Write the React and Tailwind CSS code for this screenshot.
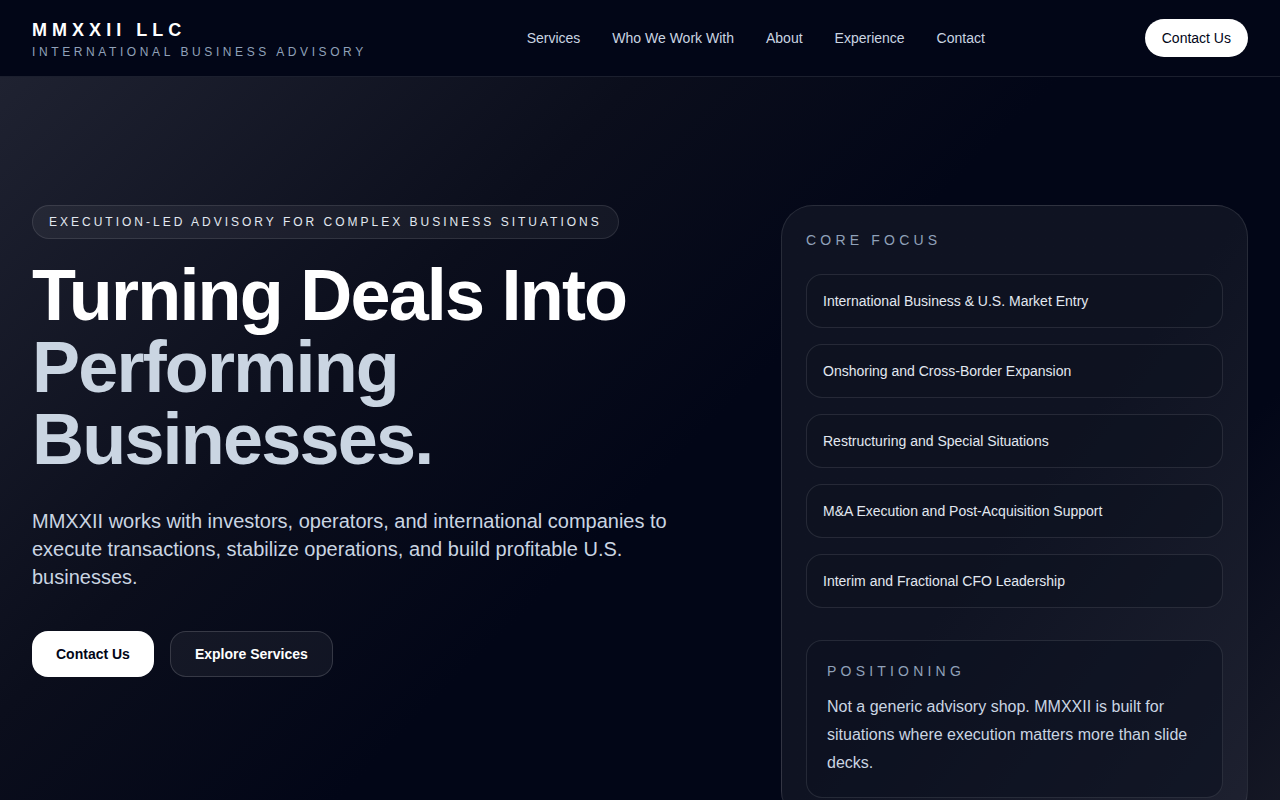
import { useState } from "react";

const navLinks = ["Services", "Who We Work With", "About", "Experience", "Contact"];

const focusItems = [
    "International Business & U.S. Market Entry",
    "Onshoring and Cross-Border Expansion",
    "Restructuring and Special Situations",
    "M&A Execution and Post-Acquisition Support",
    "Interim and Fractional CFO Leadership",
];

function Header() {
    return (
        <header className="border-b border-white/10 bg-[#020617]">
            <div className="flex items-center justify-between px-8 py-4">
                <div>
                    <div className="text-lg leading-7 font-bold tracking-[0.28em] text-white">MMXXII LLC</div>
                    <div className="text-xs leading-4 tracking-[0.3em] text-slate-400">INTERNATIONAL BUSINESS ADVISORY</div>
                </div>
                <nav className="flex items-center gap-8 text-sm text-slate-300">
                    {navLinks.map((link) => (
                        <a key={link} href="#" className="hover:text-white">
                            {link}
                        </a>
                    ))}
                </nav>
                <button type="button" className="rounded-full bg-white px-[17px] py-[9px] text-sm leading-5 text-slate-950">
                    Contact Us
                </button>
            </div>
        </header>
    );
}

function FocusCard() {
    return (
        <div className="rounded-[32px] border border-white/10 bg-gradient-to-br from-[#0f1322] via-[#0f1322] to-[#1e2130] p-6">
            <div className="text-sm leading-5 tracking-[0.3em] text-slate-400">CORE FOCUS</div>
            <div className="mt-6 flex flex-col gap-4">
                {focusItems.map((item) => (
                    <div key={item} className="rounded-2xl border border-white/10 bg-[#0e1220]/60 px-4 py-4 text-sm leading-5 font-medium text-slate-200">
                        {item}
                    </div>
                ))}
            </div>
            <div className="mt-8 rounded-2xl border border-white/10 bg-[#0c1120]/60 p-5">
                <div className="text-sm leading-5 tracking-[0.3em] text-slate-400">POSITIONING</div>
                <p className="mt-3 text-base leading-7 text-slate-300">
                    Not a generic advisory shop. MMXXII is built for situations where execution matters more than slide decks.
                </p>
            </div>
        </div>
    );
}

function App() {
    const [active] = useState(null);

    return (
        <div className="min-h-screen bg-[#020617] font-['Liberation_Sans',Arial,sans-serif] text-white">
            <Header />
            <section className="bg-[linear-gradient(135deg,#1f2231_0%,#0b0e1c_30%,#020617_50%,#020617_75%,#1a1c28_100%)]">
                <div className="grid grid-cols-[1fr_467px] items-start gap-12 px-8 pt-32 pb-24">
                    <div>
                        <div className="inline-block rounded-full border border-white/10 bg-white/5 px-4 py-2 text-xs leading-4 tracking-[0.25em] text-slate-200">
                            EXECUTION-LED ADVISORY FOR COMPLEX BUSINESS SITUATIONS
                        </div>
                        <h1 className="mt-5 text-7xl leading-[72px] font-bold tracking-tight">
                            <span className="block text-white">Turning Deals Into</span>
                            <span className="block text-slate-300">Performing Businesses.</span>
                        </h1>
                        <p className="mt-8 max-w-2xl text-xl leading-7 text-slate-300">
                            MMXXII works with investors, operators, and international companies to execute transactions, stabilize operations, and build profitable U.S. businesses.
                        </p>
                        <div className="mt-10 flex gap-4">
                            <button type="button" className="rounded-2xl bg-white px-6 py-[13px] text-sm leading-5 font-bold text-slate-950">
                                Contact Us
                            </button>
                            <button type="button" className="rounded-2xl border border-white/15 bg-white/5 px-6 py-3 text-sm leading-5 font-bold text-white">
                                Explore Services
                            </button>
                        </div>
                    </div>
                    <FocusCard />
                </div>
            </section>
        </div>
    );
}

export default App;
